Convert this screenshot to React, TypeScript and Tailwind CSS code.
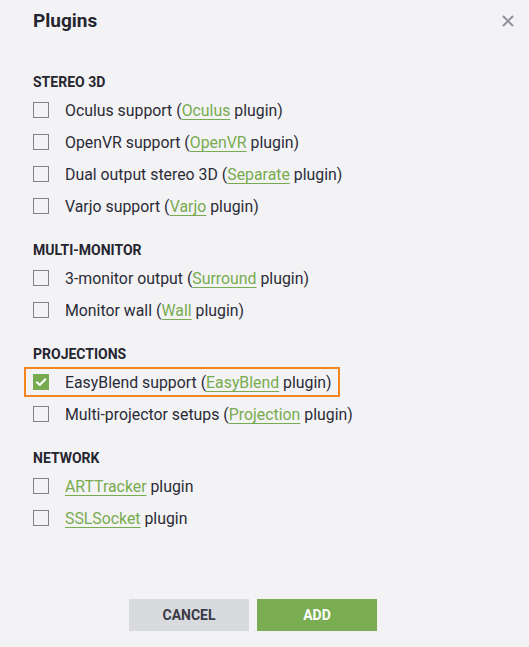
import React from "react";

type Item = { pre?: string; link: string; post: string; checked?: boolean };

const sections: { title: string; items: Item[] }[] = [
  {
    title: "STEREO 3D",
    items: [
      { pre: "Oculus support (", link: "Oculus", post: " plugin)" },
      { pre: "OpenVR support (", link: "OpenVR", post: " plugin)" },
      { pre: "Dual output stereo 3D (", link: "Separate", post: " plugin)" },
      { pre: "Varjo support (", link: "Varjo", post: " plugin)" },
    ],
  },
  {
    title: "MULTI-MONITOR",
    items: [
      { pre: "3-monitor output (", link: "Surround", post: " plugin)" },
      { pre: "Monitor wall (", link: "Wall", post: " plugin)" },
    ],
  },
  {
    title: "PROJECTIONS",
    items: [
      { pre: "EasyBlend support (", link: "EasyBlend", post: " plugin)", checked: true },
      { pre: "Multi-projector setups (", link: "Projection", post: " plugin)" },
    ],
  },
  {
    title: "NETWORK",
    items: [
      { link: "ARTTracker", post: " plugin" },
      { link: "SSLSocket", post: " plugin" },
    ],
  },
];

const Checkbox: React.FC<{ checked?: boolean }> = ({ checked }) =>
  checked ? (
    <span className="flex items-center justify-center w-4 h-4 bg-[#78ab4f] shrink-0">
      <svg width="12" height="12" viewBox="0 0 12 12" fill="none">
        <path d="M1.8 6.2 L4.8 9 L10.3 3.2" stroke="white" strokeWidth="2" strokeLinecap="round" strokeLinejoin="round" />
      </svg>
    </span>
  ) : (
    <span className="w-4 h-4 border border-[#83838f] shrink-0" />
  );

const App: React.FC = () => {
  return (
    <div
      className="w-[529px] h-[647px] bg-[#f3f3f6] flex flex-col text-[#2b2b37]"
      style={{ fontFamily: "Roboto, 'Liberation Sans', sans-serif" }}
    >
      <div className="flex items-center justify-between pl-[33px] pr-[14px] pt-[7px]">
        <h1 className="text-[19px] leading-[28px] font-bold text-[#25252f]">Plugins</h1>
        <svg width="12" height="12" viewBox="0 0 12 12" className="mr-[1px]">
          <path d="M1 1 L11 11 M11 1 L1 11" stroke="#8c8c97" strokeWidth="1.8" />
        </svg>
      </div>

      <div className="flex flex-col gap-4 px-[33px] mt-[35px]">
        {sections.map((s) => (
          <div key={s.title} className="flex flex-col">
            <div className="h-6 flex items-center text-[14px] font-bold text-[#25252f]">{s.title}</div>
            {s.items.map((it) => (
              <div key={it.link} className="h-8 flex items-center">
                <div
                  className={
                    "inline-flex items-center h-[30px] -ml-[9px] pl-[7px] pr-[6px] border-2 " +
                    (it.checked ? "border-[#f5861f]" : "border-transparent")
                  }
                >
                  <Checkbox checked={it.checked} />
                  <span className="ml-4 pt-[2px] text-[15.85px] leading-none whitespace-nowrap">
                    {it.pre}
                    <span className="text-[#78ab4f] underline underline-offset-[3px] decoration-[1px]">{it.link}</span>
                    {it.post}
                  </span>
                </div>
              </div>
            ))}
          </div>
        ))}
      </div>

      <div className="mt-auto pb-4 pl-[129px] flex gap-2">
        <button className="w-[120px] h-8 bg-[#d9dadd] text-[#3a3a48] text-[14px] font-bold uppercase">Cancel</button>
        <button className="w-[120px] h-8 bg-[#7aad51] text-white text-[14px] font-bold uppercase">Add</button>
      </div>
    </div>
  );
};

export default App;
